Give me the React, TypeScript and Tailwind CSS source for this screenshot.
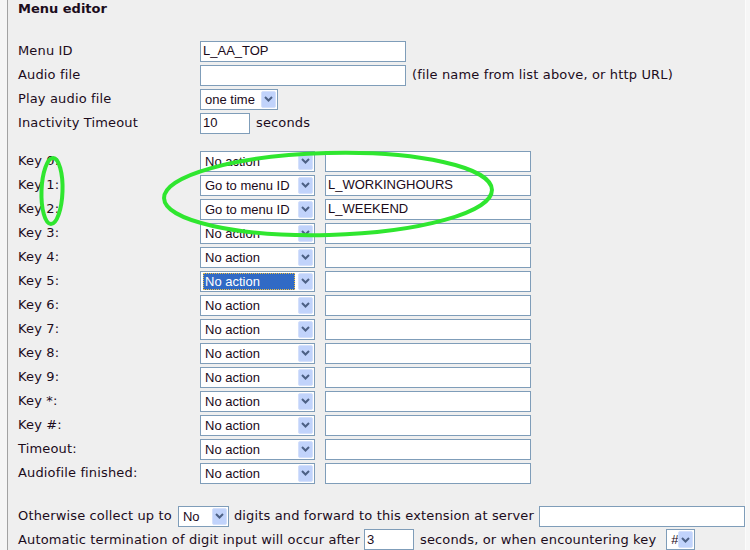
import React from "react";

const labelFont = { fontFamily: '"DejaVu Sans", Verdana, sans-serif' };

function Arrow() {
  return (
    <span className="mr-px flex h-[17px] w-[15px] shrink-0 items-center justify-center rounded-[2px] border border-[#d4e0fb] bg-[#c1d3fb]">
      <svg width="9" height="6" viewBox="0 0 9 6" aria-hidden="true">
        <path d="M1 1 L4.5 4.5 L8 1" fill="none" stroke="#4d6185" strokeWidth="2" />
      </svg>
    </span>
  );
}

type SelectProps = { value: string; w: string; highlight?: boolean };

function FakeSelect({ value, w, highlight }: SelectProps) {
  return (
    <div
      className={`flex h-[21px] shrink-0 items-center border border-[#7f9db9] bg-white font-['Liberation_Sans',Arial,sans-serif] text-[13px] tracking-normal text-[#1a0a1a] ${w}`}
    >
      <span className="flex min-w-0 flex-1 items-center pl-[2px] pr-[3px]">
        {highlight ? (
          <span className="block h-[17px] w-full border border-dotted border-[#f0c040] bg-[#316ac5] pl-px leading-[15px] text-white">
            {value}
          </span>
        ) : (
          <span className="pl-[2px] leading-[17px]">{value}</span>
        )}
      </span>
      <Arrow />
    </div>
  );
}

function TextBox({ value = "", w, ml = "" }: { value?: string; w: string; ml?: string }) {
  return (
    <div
      className={`flex h-[21px] shrink-0 items-center border border-[#7f9db9] bg-white px-[2px] font-['Liberation_Sans',Arial,sans-serif] text-[13px] tracking-normal text-[#1a0a1a] ${w} ${ml}`}
    >
      {value}
    </div>
  );
}

const keys = [
  { label: "Key 0:", action: "No action", id: "" },
  { label: "Key 1:", action: "Go to menu ID", id: "L_WORKINGHOURS" },
  { label: "Key 2:", action: "Go to menu ID", id: "L_WEEKEND" },
  { label: "Key 3:", action: "No action", id: "" },
  { label: "Key 4:", action: "No action", id: "" },
  { label: "Key 5:", action: "No action", id: "", highlight: true },
  { label: "Key 6:", action: "No action", id: "" },
  { label: "Key 7:", action: "No action", id: "" },
  { label: "Key 8:", action: "No action", id: "" },
  { label: "Key 9:", action: "No action", id: "" },
  { label: "Key *:", action: "No action", id: "" },
  { label: "Key #:", action: "No action", id: "" },
  { label: "Timeout:", action: "No action", id: "" },
  { label: "Audiofile finished:", action: "No action", id: "" },
];

function Row({ label, children }: { label: string; children: React.ReactNode }) {
  return (
    <div className="flex h-6 items-center">
      <span className="w-[182px] shrink-0">{label}</span>
      {children}
    </div>
  );
}

export default function App() {
  return (
    <div className="relative h-[550px] w-[750px] overflow-hidden bg-[#f6f6f6]">
      <div
        className="ml-[7px] h-[550px] w-[739px] border-l border-r border-l-[#a3a3a3] border-r-[#fbfbfb] bg-[#efefef] pl-[10px] text-[13px] tracking-[0.15px] text-[#1c0c1c]"
        style={labelFont}
      >
        <div className="h-[18px] font-bold leading-[18px] tracking-normal">Menu editor</div>

        <div className="mt-[21px]">
          <Row label="Menu ID">
            <TextBox value="L_AA_TOP" w="w-[206px]" />
          </Row>
          <Row label="Audio file">
            <TextBox w="w-[206px]" />
            <span className="ml-[6px]">(file name from list above, or http URL)</span>
          </Row>
          <Row label="Play audio file">
            <FakeSelect value="one time" w="w-[78px]" />
          </Row>
          <Row label="Inactivity Timeout">
            <TextBox value="10" w="w-[50px]" />
            <span className="ml-[6px]">seconds</span>
          </Row>
        </div>

        <div className="mt-[14px]">
          {keys.map((k) => (
            <Row key={k.label} label={k.label}>
              <FakeSelect value={k.action} w="w-[115px]" highlight={k.highlight} />
              <TextBox value={k.id} w="w-[206px]" ml="ml-[10px]" />
            </Row>
          ))}
        </div>

        <div className="mt-[19px]">
          <div className="flex h-6 items-center">
            <span>Otherwise collect up to</span>
            <span className="ml-[6px]">
              <FakeSelect value="No" w="w-[51px]" />
            </span>
            <span className="ml-[5px]">digits and forward to this extension at server</span>
            <TextBox w="w-[206px]" ml="ml-[5px]" />
          </div>
          <div className="flex h-[23px] items-center">
            <span>Automatic termination of digit input will occur after</span>
            <TextBox value="3" w="w-[50px]" ml="ml-1" />
            <span className="ml-[6px]">seconds, or when encountering key</span>
            <span className="ml-[10px]">
              <FakeSelect value="#" w="w-[29px]" />
            </span>
          </div>
        </div>
      </div>

      <svg
        className="pointer-events-none absolute left-0 top-0"
        width="750"
        height="550"
        viewBox="0 0 750 550"
        aria-hidden="true"
      >
        <ellipse
          cx="52"
          cy="191"
          rx="10.5"
          ry="33"
          fill="none"
          stroke="#2fe62f"
          strokeWidth="4"
          transform="rotate(2 52 191)"
        />
        <ellipse
          cx="328"
          cy="194"
          rx="164"
          ry="41"
          fill="none"
          stroke="#2fe62f"
          strokeWidth="4"
          transform="rotate(-1.5 328 194)"
        />
      </svg>
    </div>
  );
}
